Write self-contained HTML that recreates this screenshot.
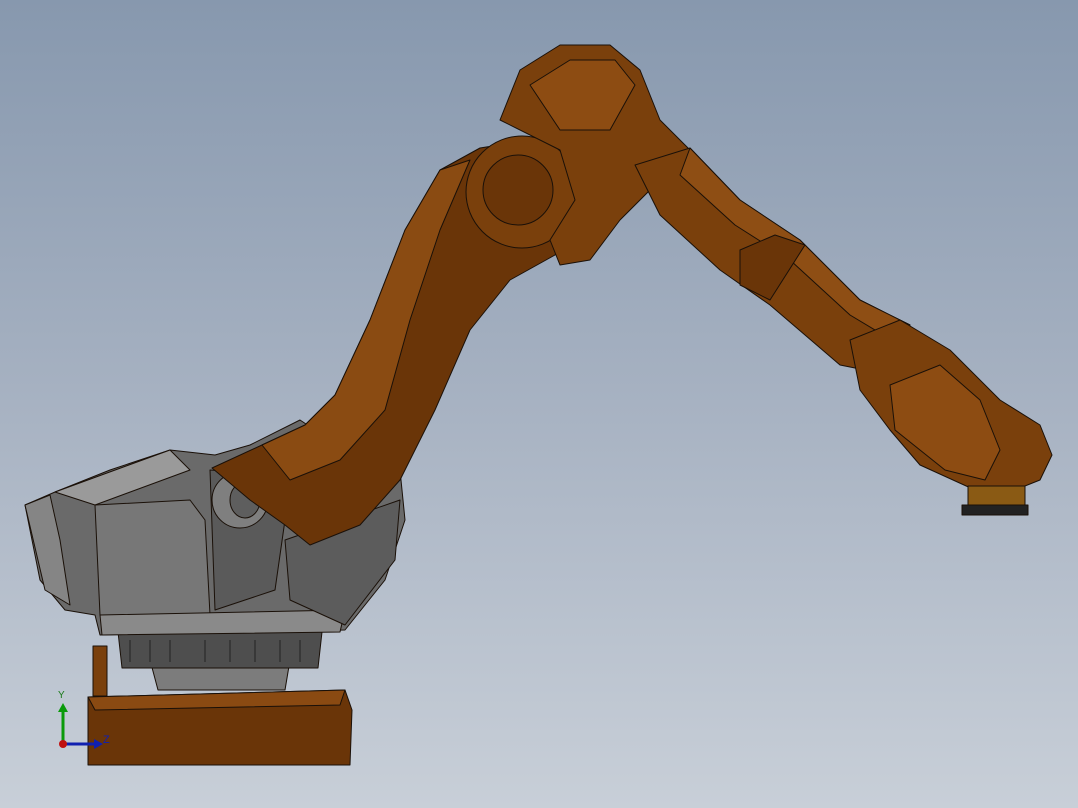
<!DOCTYPE html>
<html><head><meta charset="utf-8"><style>
html,body{margin:0;padding:0;width:1078px;height:808px;overflow:hidden}
body{background:linear-gradient(#8798ae 0%,#a7b2c2 50%,#c8cfd8 100%)}
svg{position:absolute;left:0;top:0}
</style></head><body>
<svg width="1078" height="808" viewBox="0 0 1078 808" xmlns="http://www.w3.org/2000/svg">
<g stroke="#1a1008" stroke-width="1" stroke-linejoin="round">
<!-- pedestal -->
<rect x="93" y="646" width="14" height="50" fill="#7a400c"/>
<path d="M88 697 L345 690 L352 710 L350 765 L88 765 Z" fill="#6a3508"/>
<path d="M88 697 L345 690 L340 705 L95 710 Z" fill="#8a4a12"/>
<!-- turntable -->
<path d="M150 660 L290 660 L285 690 L158 690 Z" fill="#7c7c7c"/>
<path d="M118 632 L322 632 L318 668 L122 668 Z" fill="#4e4e4e"/>
<g stroke="#222" fill="none">
<path d="M130 640v22M150 640v22M170 640v22M205 640v22M230 640v22M255 640v22M280 640v22M300 640v22"/>
</g>
<!-- gray base body -->
<path d="M25 505 L55 492 L110 470 L170 450 L215 455 L250 445 L300 420 L330 440 L400 470 L405 520 L385 580 L345 630 L100 635 L95 615 L65 610 L40 580 Z" fill="#6a6a6a"/>
<path d="M55 492 L170 450 L190 470 L95 505 Z" fill="#9a9a9a"/>
<path d="M25 505 L50 495 L60 540 L70 605 L45 590 Z" fill="#858585"/>
<path d="M95 505 L190 500 L205 520 L210 615 L100 615 Z" fill="#777"/>
<path d="M210 470 L280 475 L285 520 L275 590 L215 610 Z" fill="#5a5a5a"/>
<ellipse cx="240" cy="500" rx="28" ry="28" fill="#7f7f7f"/>
<ellipse cx="245" cy="500" rx="15" ry="18" fill="#5e5e5e"/>
<path d="M100 615 L345 610 L340 632 L102 635 Z" fill="#8a8a8a"/>
<path d="M285 540 L400 500 L395 560 L345 625 L290 600 Z" fill="#5c5c5c"/>
<!-- lower arm -->
<path d="M212 468 L262 445 L305 425 L335 395 L370 320 L405 230 L440 170 L480 148 L530 140 L560 165 L575 220 L555 255 L510 280 L470 330 L435 410 L400 480 L360 525 L310 545 L285 525 L250 500 Z" fill="#6a3508"/>
<path d="M262 445 L305 425 L335 395 L370 320 L405 230 L440 170 L470 160 L440 230 L410 320 L385 410 L340 460 L290 480 Z" fill="#8a4b12"/>
<!-- elbow -->
<circle cx="522" cy="192" r="56" fill="#7a400c"/>
<circle cx="518" cy="190" r="35" fill="#6a3508"/>
<!-- upper housing -->
<path d="M500 120 L520 70 L560 45 L610 45 L640 70 L660 120 L690 150 L650 190 L620 220 L590 260 L560 265 L550 240 L575 200 L560 150 Z" fill="#7a400c"/>
<path d="M530 85 L570 60 L615 60 L635 85 L610 130 L560 130 Z" fill="#8d4c12"/>
<!-- forearm -->
<path d="M635 165 L690 148 L740 200 L800 240 L860 300 L910 325 L890 375 L840 365 L770 305 L720 270 L660 215 Z" fill="#7a400c"/>
<path d="M690 148 L740 200 L800 240 L860 300 L910 325 L900 345 L850 315 L790 260 L735 225 L680 175 Z" fill="#8e4e14"/>
<path d="M740 250 L775 235 L805 245 L770 300 L740 285 Z" fill="#6a3508"/>
<!-- wrist -->
<path d="M850 340 L900 320 L950 350 L1000 400 L1040 425 L1052 455 L1040 480 L1015 490 L975 490 L920 465 L890 430 L860 390 Z" fill="#7a400c"/>
<path d="M890 385 L940 365 L980 400 L1000 450 L985 480 L945 470 L895 430 Z" fill="#8d4c12"/>
<path d="M968 486 L1025 486 L1025 505 L968 505 Z" fill="#8a5a14"/>
<path d="M962 505 L1028 505 L1028 515 L962 515 Z" fill="#222"/>
</g>
<!-- axis triad -->
<line x1="63" y1="744" x2="63" y2="710" stroke="#0a9a0a" stroke-width="3"/>
<path d="M58 712 L63 703 L68 712 Z" fill="#0a9a0a"/>
<line x1="63" y1="744" x2="96" y2="744" stroke="#1020b0" stroke-width="3"/>
<path d="M94 739 L103 744 L94 749 Z" fill="#1020b0"/>
<circle cx="63" cy="744" r="4" fill="#c01010"/>
<text x="58" y="698" font-family="Liberation Sans, sans-serif" font-size="10" fill="#1a7a1a">Y</text>
<text x="103" y="743" font-family="Liberation Sans, sans-serif" font-size="11" fill="#1020b0">Z</text>
</svg>
</body></html>
